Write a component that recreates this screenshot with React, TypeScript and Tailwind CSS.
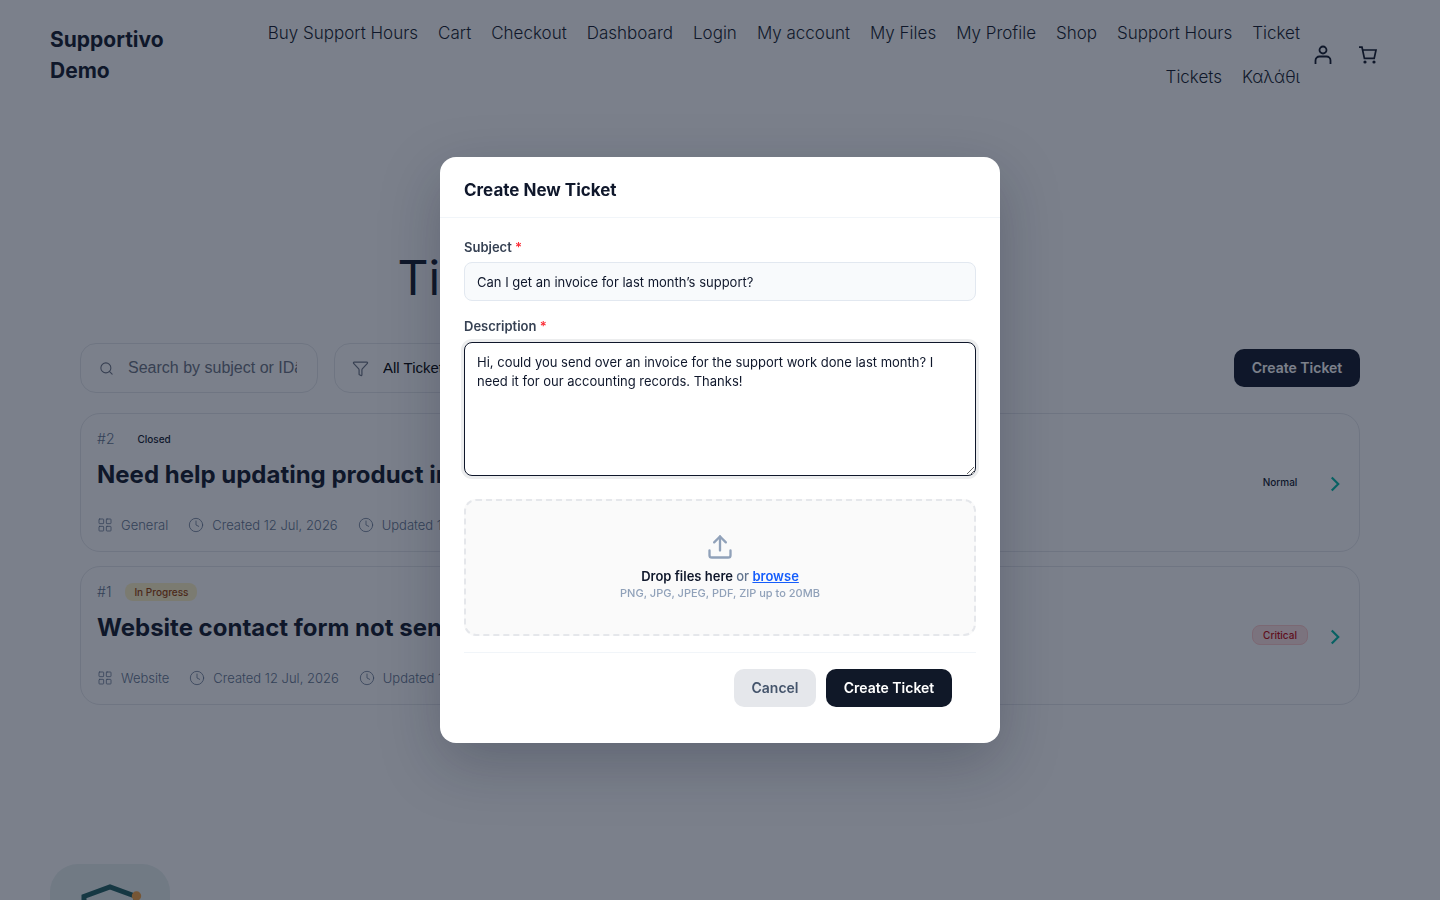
import React from "react";
import { ChevronRight, Clock, Funnel, LayoutGrid, Search } from "lucide-react";

interface Ticket {
  id: number;
  status: string;
  statusClass: string;
  title: string;
  category: string;
  created: string;
  updated: string;
  priority: string;
  priorityClass: string;
}

const navLinks: string[] = [
  "Buy Support Hours",
  "Cart",
  "Checkout",
  "Dashboard",
  "Login",
  "My account",
  "My Files",
  "My Profile",
  "Shop",
  "Support Hours",
  "Ticket",
  "Tickets",
  "Καλάθι",
];

const tickets: Ticket[] = [
  {
    id: 2,
    status: "Closed",
    statusClass: "text-slate-900",
    title: "Need help updating product images",
    category: "General",
    created: "Created 12 Jul, 2026",
    updated: "Updated 12 Jul, 2026",
    priority: "Normal",
    priorityClass: "border-transparent text-slate-900",
  },
  {
    id: 1,
    status: "In Progress",
    statusClass: "bg-amber-100 text-amber-800",
    title: "Website contact form not sending",
    category: "Website",
    created: "Created 12 Jul, 2026",
    updated: "Updated 12 Jul, 2026",
    priority: "Critical",
    priorityClass: "border-red-200 bg-red-100 text-red-700",
  },
];

const Header: React.FC = () => (
  <header className="flex items-center px-[50px] pt-[11px]">
    <a href="#" className="w-[140px] shrink-0 text-[21px] leading-[31px] font-bold text-gray-900">
      Supportivo Demo
    </a>
    <nav className="ml-10 flex flex-1 flex-wrap justify-end gap-x-5">
      {navLinks.map((link) => (
        <a key={link} href="#" className="text-[17px] leading-[44px] font-light text-gray-900">
          {link}
        </a>
      ))}
    </nav>
    <div className="mr-3 ml-[14px] flex items-center gap-[26px] text-gray-900">
      <button type="button" aria-label="Account">
        <svg width="18" height="20" viewBox="0 0 18 20" fill="none" stroke="currentColor" strokeWidth="1.8">
          <circle cx="9" cy="5" r="3.5" />
          <path d="M1.5 19v-3.5a4 4 0 0 1 4-4h7a4 4 0 0 1 4 4V19" />
        </svg>
      </button>
      <button type="button" aria-label="Cart">
        <svg width="20" height="20" viewBox="0 0 20 20" fill="none" stroke="currentColor" strokeWidth="1.7">
          <path d="M1 2.2h3l2.4 11.2h9.8L18 5H4.7" />
          <circle cx="7" cy="17" r="1.6" fill="currentColor" stroke="none" />
          <circle cx="16" cy="17" r="1.6" fill="currentColor" stroke="none" />
        </svg>
      </button>
    </div>
  </header>
);

const Toolbar: React.FC = () => (
  <div className="flex items-center gap-4">
    <label className="flex h-[50px] w-[238px] items-center gap-[14px] rounded-2xl border border-gray-200 pr-5 pl-[18px]">
      <Search size={15} strokeWidth={1.7} className="shrink-0 text-gray-500" />
      <input
        type="text"
        aria-label="Search tickets"
        placeholder="Search by subject or IDâ€¦"
        className="w-full min-w-0 font-['Liberation_Sans',Arial,sans-serif] text-base placeholder:text-gray-500"
      />
    </label>
    <label className="flex h-[50px] w-[200px] items-center gap-[14px] rounded-2xl border border-gray-200 pr-4 pl-[17px]">
      <Funnel size={17} strokeWidth={1.7} className="shrink-0 text-gray-500" />
      <select
        aria-label="Filter tickets"
        className="flex-1 appearance-none font-['Liberation_Sans',Arial,sans-serif] text-[15px] text-black"
      >
        <option>All Tickets</option>
        <option>Closed</option>
        <option>In Progress</option>
      </select>
    </label>
    <button
      type="button"
      className="ml-auto h-[38px] w-[126px] rounded-[10px] bg-gray-900 text-sm font-semibold text-white"
    >
      Create Ticket
    </button>
  </div>
);

const TicketCard: React.FC<{ ticket: Ticket }> = ({ ticket }) => (
  <article className="flex items-center rounded-[20px] border border-gray-200 pt-[15px] pr-[11px] pb-4 pl-4">
    <div className="flex-1">
      <div className="flex items-center gap-[14px]">
        <span className="text-sm leading-5 font-light text-slate-500">#{ticket.id}</span>
        <span className={`rounded-lg px-[9px] text-[10px] leading-[18px] font-medium ${ticket.statusClass}`}>
          {ticket.status}
        </span>
      </div>
      <h2 className="mt-[10px] text-2xl leading-[32px] font-bold text-gray-900">{ticket.title}</h2>
      <div className="mt-6 flex items-center gap-5 text-[13px] leading-5 font-light text-slate-500">
        <span className="flex items-center gap-2">
          <LayoutGrid size={16} strokeWidth={1.2} />
          {ticket.category}
        </span>
        <span className="flex items-center gap-2">
          <Clock size={16} strokeWidth={1.2} />
          {ticket.created}
        </span>
        <span className="flex items-center gap-2">
          <Clock size={16} strokeWidth={1.2} />
          {ticket.updated}
        </span>
      </div>
    </div>
    <span
      className={`min-w-[56px] rounded-lg border text-center text-[10px] leading-[18px] font-medium ${ticket.priorityClass}`}
    >
      {ticket.priority}
    </span>
    <a href="#" aria-label={`Open ticket ${ticket.id}`} className="ml-[14px] pt-1">
      <ChevronRight size={26} strokeWidth={2} strokeLinecap="butt" strokeLinejoin="miter" className="text-teal-500" />
    </a>
  </article>
);

const CreateTicketModal: React.FC = () => (
  <div className="fixed inset-0 flex items-center justify-center bg-slate-900/55">
    <div
      role="dialog"
      aria-labelledby="modal-title"
      className="w-[560px] rounded-2xl bg-white shadow-[0_20px_60px_rgba(15,23,42,0.25)]"
    >
      <h2
        id="modal-title"
        className="border-b border-slate-100 px-6 pt-[21px] pb-[15px] text-[17px] leading-6 font-bold text-slate-900"
      >
        Create New Ticket
      </h2>
      <form className="px-6 pt-[19px] pb-9">
        <label htmlFor="subject" className="block text-[13px] leading-5 font-semibold text-gray-700">
          Subject <span className="text-red-500">*</span>
        </label>
        <input
          id="subject"
          type="text"
          defaultValue="Can I get an invoice for last month’s support?"
          className="mt-[5px] h-[39px] w-full rounded-lg border border-slate-200 bg-slate-50 px-3 text-[13px] text-slate-900"
        />
        <label htmlFor="description" className="mt-[15px] block text-[13px] leading-5 font-semibold text-gray-700">
          Description <span className="text-red-500">*</span>
        </label>
        <textarea
          id="description"
          defaultValue="Hi, could you send over an invoice for the support work done last month? I need it for our accounting records. Thanks!"
          className="mt-1.5 block h-[134px] w-full rounded-lg border border-slate-900 bg-white px-3 py-[10px] text-[13px] leading-[19px] text-slate-900 ring-3 ring-slate-900/8 outline-none"
        />
        <div className="mt-[23px] flex h-[137px] flex-col items-center justify-center rounded-xl border-2 border-dashed border-gray-200 bg-neutral-50 pb-0.5">
          <svg
            className="text-slate-400"
            width="28"
            height="28"
            viewBox="0 0 24 24"
            fill="none"
            stroke="currentColor"
            strokeWidth="2"
            strokeLinecap="round"
            strokeLinejoin="round"
          >
            <path d="M3 15v4a2 2 0 0 0 2 2h14a2 2 0 0 0 2-2v-4" />
            <path d="M17 8l-5-5-5 5" />
            <path d="M12 3v12" />
          </svg>
          <p className="mt-[5px] text-[13px] leading-5 font-semibold text-slate-500">
            <span className="text-slate-900">Drop files here</span> <span className="font-medium">or</span>{" "}
            <a href="#" className="text-blue-600 underline">
              browse
            </a>
          </p>
          <p className="text-[11px] leading-[14px] font-medium text-slate-400">PNG, JPG, JPEG, PDF, ZIP up to 20MB</p>
        </div>
        <div className="mt-4 flex justify-end gap-[10px] border-t border-slate-100 px-6 pt-4">
          <button
            type="button"
            className="h-[38px] w-[82px] rounded-[10px] bg-gray-200 text-sm font-semibold text-slate-600"
          >
            Cancel
          </button>
          <button
            type="submit"
            className="h-[38px] w-[126px] rounded-[10px] bg-gray-900 text-sm font-semibold text-white"
          >
            Create Ticket
          </button>
        </div>
      </form>
    </div>
  </div>
);

const App: React.FC = () => {
  return (
    <div className="h-screen overflow-hidden bg-white font-['Inter',sans-serif]">
      <Header />
      <main className="px-20 pt-[148px]">
        <h1 className="mx-auto max-w-[645px] text-[48px] leading-[62px] text-gray-900">Tickets</h1>
        <div className="mt-[34px]">
          <Toolbar />
        </div>
        <div className="mt-5 flex flex-col gap-[14px]">
          {tickets.map((ticket) => (
            <TicketCard key={ticket.id} ticket={ticket} />
          ))}
        </div>
      </main>
      <footer className="mt-[159px] px-[50px]">
        <svg width="120" height="120" viewBox="0 0 120 120" fill="none">
          <rect width="120" height="120" rx="28" fill="#e8f1f0" />
          <path d="M34 90V32.5L60 23l26 9.5V90L60 100Z" stroke="#1f5f5f" strokeWidth="5" />
          <circle cx="86.5" cy="32" r="4.7" fill="#f4a340" />
        </svg>
      </footer>
      <CreateTicketModal />
    </div>
  );
};

export default App;
